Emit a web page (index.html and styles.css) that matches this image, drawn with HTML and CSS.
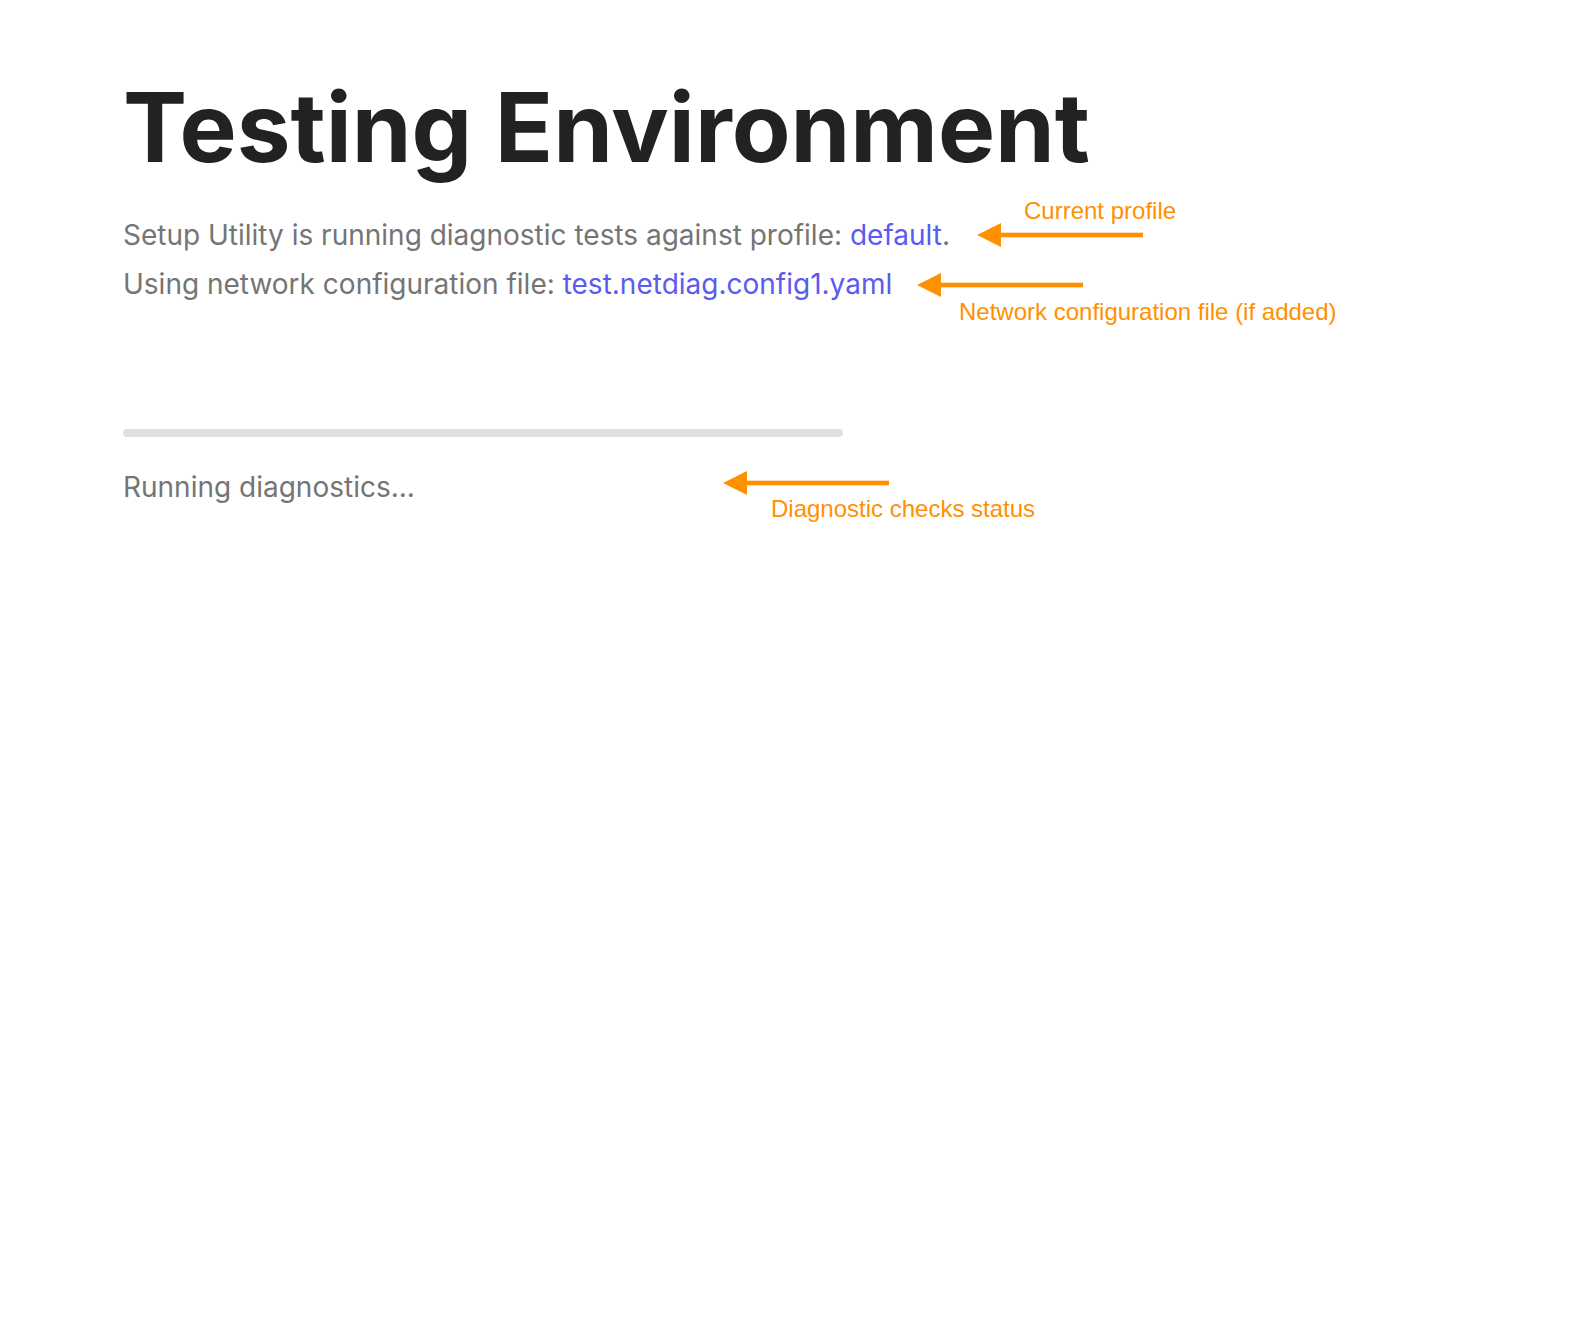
FILE: index.html
```html
<!DOCTYPE html>
<html>
    <head>
        <meta charset="utf-8" />
        <title>Testing Environment</title>
        <link rel="stylesheet" href="styles.css">
    </head>

    <body>
        <div class="m-screen">
            <div class="main">
                <h1 class="title">Testing Environment</h1>
                <p class="line">Setup Utility is running diagnostic tests against profile: <span class="hl">default</span>.</p>
                <p class="line">Using network configuration file: <span class="hl">test.netdiag.config1.yaml</span></p>

                <div class="progress"><div class="bar"></div></div>
                <p class="line status">Running diagnostics...</p>
            </div>

            <!-- callouts -->
            <div class="note n-profile">Current profile</div>
            <div class="note n-config">Network configuration file (if added)</div>
            <div class="note n-status">Diagnostic checks status</div>

            <svg class="arrow a-profile" width="166" height="24" viewBox="0 0 166 24"><polygon points="0,12 24,0 24,24" /><rect x="22" y="9.7" width="144" height="4.6" /></svg>
            <svg class="arrow a-config" width="166" height="24" viewBox="0 0 166 24"><polygon points="0,12 24,0 24,24" /><rect x="22" y="9.7" width="144" height="4.6" /></svg>
            <svg class="arrow a-status" width="166" height="24" viewBox="0 0 166 24"><polygon points="0,12 24,0 24,24" /><rect x="22" y="9.7" width="144" height="4.6" /></svg>
        </div>
    </body>
</html>
```

FILE: styles.css
```css
*{margin:0;padding:0;}
body{background:#fff;font-family:Inter,"Noto Sans",sans-serif;}

.m-screen{position:relative;width:1588px;height:1328px;}
.m-screen .main{padding:70px 0 0 123px;}
.m-screen .title{font-size:96px;line-height:1.2;font-weight:700;color:#222;}
.m-screen .line{margin-top:0;font-size:28px;line-height:49px;color:#757575;}
.m-screen .title + .line{margin-top:26px;}
.m-screen .hl{color:#5b5bf0;}
.m-screen .progress{width:720px;height:8px;margin-top:120px;border-radius:4px;background:#e0e0e0;overflow:hidden;}
.m-screen .progress .bar{width:0;height:100%;}
.m-screen .status{margin-top:26px;}

.note{position:absolute;font-family:"Liberation Sans",Arial,sans-serif;font-size:24px;line-height:24px;color:#ff9000;white-space:nowrap;}
.n-profile{left:1024px;top:199px;}
.n-config{left:959px;top:300px;}
.n-status{left:771px;top:497px;}

.arrow{position:absolute;fill:#ff9000;}
.a-profile{left:977px;top:223px;}
.a-config{left:917px;top:273px;}
.a-status{left:723px;top:471px;}
```
